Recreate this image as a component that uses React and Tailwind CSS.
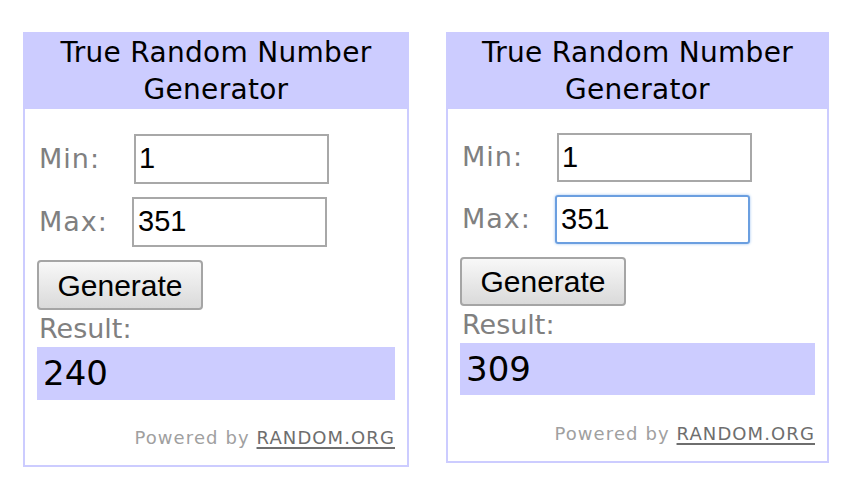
const verdana = { fontFamily: '"DejaVu Sans", Verdana, sans-serif' };

const Widget = ({ result, focused, compact, size }) => {
  const inputH = compact ? "h-[49px]" : "h-[50px]";
  return (
    <div
      className={`flex flex-col border-2 border-[#ccccff] bg-white ${size}`}
      style={verdana}
    >
      {/* Header */}
      <div className="bg-[#ccccff] text-center text-[28px] leading-[37px] tracking-[0.3px] text-black pb-[1px]">
        True Random Number
        <br />
        Generator
      </div>

      <div className={`flex flex-col flex-1 px-3 ${compact ? "pt-[24px]" : "pt-[25px]"}`}>
        {/* Min */}
        <div className="flex items-center">
          <span className="w-[97px] pl-[2px] text-[27px] tracking-[1px] text-[#808080]">Min:</span>
          <div className={`${inputH} w-[195px] border-2 border-[#a8a8a8] flex items-center pl-[3px] text-[29px] text-black font-['Liberation_Sans',Arial,sans-serif]`}>
            1
          </div>
        </div>

        {/* Max */}
        <div className="flex items-center mt-[13px]">
          <span className="w-[95px] pl-[2px] text-[27px] tracking-[1px] text-[#808080]">Max:</span>
          {focused ? (
            <div className={`${inputH} w-[195px] border-2 border-[#6b9fe0] rounded-[3px] shadow-[0_0_3px_#9cc2f0] flex items-center pl-[4px] text-[29px] text-black font-['Liberation_Sans',Arial,sans-serif]`}>
              351
            </div>
          ) : (
            <div className={`${inputH} w-[195px] border-2 border-[#a8a8a8] flex items-center pl-[4px] text-[29px] text-black font-['Liberation_Sans',Arial,sans-serif]`}>
              351
            </div>
          )}
        </div>

        {/* Generate */}
        <div className="mt-[13px]">
          <button className={`${inputH} w-[166px] rounded-[4px] border-2 border-[#a5a5a5] bg-gradient-to-b from-[#f8f8f8] to-[#dadada] text-[30px] text-black font-['Liberation_Sans',Arial,sans-serif]`}>
            Generate
          </button>
        </div>

        {/* Result */}
        <div className="text-[27px] leading-[37px] text-[#808080] pl-[2px]">Result:</div>
        <div className={`${compact ? "h-[52px]" : "h-[53px]"} bg-[#ccccff] flex items-center pl-[6px] text-[34px] text-black`}>
          {result}
        </div>

        <div className="mt-auto mb-[16px] text-right text-[18px] leading-[22px] tracking-[1.1px]">
          <span className="text-[#a0a0a0]">Powered by </span>
          <span className="text-[#6e6e6e] underline underline-offset-[3px] decoration-2">RANDOM.ORG</span>
        </div>
      </div>
    </div>
  );
};

export default function App() {
  return (
    <div className="w-[852px] h-[495px] bg-white flex items-start gap-[37px] pl-[23px] pt-[32px]">
      <Widget result="240" size="w-[386px] h-[435px]" />
      <Widget result="309" focused compact size="w-[383px] h-[431px]" />
    </div>
  );
}
